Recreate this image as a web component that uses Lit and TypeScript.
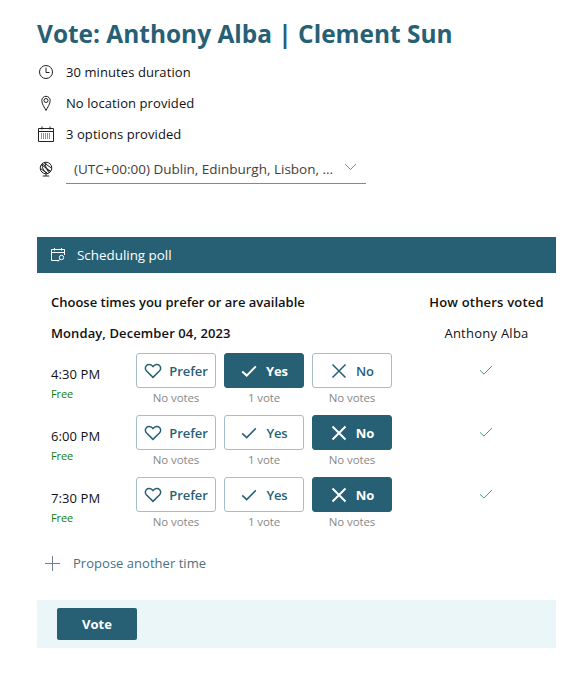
import { LitElement, html, css, svg } from "lit";
import { customElement } from "lit/decorators.js";

const clock = svg`<circle cx="8" cy="8" r="6.500"/><path d="M8 3.600V8.500H11.500"/>`;
const pin = svg`<path d="M8 15.500C6.600 12.500 3.800 9 3.800 5.500A4.200 4.200 0 0 1 12.200 5.500C12.200 9 9.400 12.500 8 15.500Z"/><circle cx="8" cy="5.500" r="2"/>`;
const cal = svg`<path d="M.5 2.500H15.500V15.500H.5ZM.5 5.500H15.500M4 .5V3.500M12 .5V3.500"/><path stroke-dasharray="1 1" d="M3 8H13M3 10H13M3 12H13"/>`;
const globe = svg`<circle cx="8" cy="7" r="5.800"/><path d="M3 3.500L13 10.500M2.600 7.500L9 12.400M6 1.800L13.400 7M4.400 2.900C3.600 6.400 5.400 10 9.400 12.300M8 1.500C6.600 5 8.600 9.500 13 10.500M5.400 3L11 11.700M8 12.800V15M4.800 15H11.200"/>`;
const poll = svg`<path d="M9 13.500H1.500V2.500H14.500V8M1.500 5.500H14.500M4.500 1V3.500M11.500 1V3.500"/><circle cx="11.500" cy="10.500" r="2.200"/><path d="M10 12.200L8 14.500"/>`;
const heart = svg`<path d="M9 15.400L2.600 9.100C.9 7.300 1 4.900 2.500 3.500C4.100 2 6.900 2.100 9 4.500C11.100 2.100 13.900 2 15.500 3.500C17 4.900 17.100 7.300 15.400 9.100Z"/>`;
const check = svg`<path d="M2.200 9.400L6.700 13.600L15.800 4.400"/>`;
const cross = svg`<path d="M2.500 2.500L15.500 15.500M15.500 2.500L2.500 15.500"/>`;
const chevron = svg`<path d="M1 1L6.500 6.500L12 1"/>`;
const plus = svg`<path d="M7.500 0V15M0 7.500H15"/>`;

type Choice = "prefer" | "yes" | "no";
const rows: { time: string; on: Choice }[] = [
  { time: "4:30 PM", on: "yes" },
  { time: "6:00 PM", on: "no" },
  { time: "7:30 PM", on: "no" },
];
const options: { id: Choice; label: string; votes: string; icon: unknown }[] = [
  { id: "prefer", label: "Prefer", votes: "No votes", icon: heart },
  { id: "yes", label: "Yes", votes: "1 vote", icon: check },
  { id: "no", label: "No", votes: "No votes", icon: cross },
];

@customElement("app-root")
export class AppRoot extends LitElement {
  static styles = css`
    :host { display: block; width: 587px; height: 675px; overflow: hidden; background: #fff;
      font-family: "Open Sans", "Noto Sans", sans-serif; color: #111; font-size: 13px; }
    * { box-sizing: border-box; }
    .page { padding: 16px 31px 0 37px; }
    h1 { margin: 0; font-size: 24.450px; line-height: 36px; font-weight: 700; color: #275f75; }
    .info { display: flex; flex-direction: column; margin-top: 4px; }
    .line { display: flex; align-items: center; height: 31px; gap: 12px; }
    .line svg { width: 16px; height: 16px; fill: none; stroke: #222; stroke-width: 1; margin-left: 1px; }
    .line span { letter-spacing: .08px; }
    .tzline { margin-top: 3px; height: 36px; align-items: flex-start; }
    .tzline > svg { margin-top: 9px; }
    .tz { width: 300px; height: 30px; border-bottom: 1px solid #8a8886; display: flex;
      align-items: center; justify-content: space-between; padding: 0 9px 0 8px; color: #3f3e3d; font-size: 13.500px; margin-top: 2px; }
    .tz svg { width: 13px; height: 8px; stroke: #8a8886; margin: 0 0 3px; }
    .tz span { letter-spacing: 0; }
    .bar { margin-top: 49px; height: 36px; background: #275f75; color: #fff; display: flex; align-items: center;
      gap: 11px; padding-left: 13px; font-size: 13.400px; }
    .bar svg { width: 16px; height: 16px; fill: none; stroke: #fff; stroke-width: 1; }
    .body { padding-left: 14px; }
    .heads { display: grid; grid-template-columns: 1fr 139px; }
    .heads div { height: 31px; display: flex; align-items: center; font-weight: 600; }
    .heads .c { justify-content: center; letter-spacing: .2px; }
    .t1 { margin-top: 13px; }
    .heads .date { letter-spacing: .1px; }
    .heads .reg { font-weight: 400; letter-spacing: .25px; }
    .rows { margin-top: 5px; }
    .row { display: grid; grid-template-columns: 85px 256px 1fr; height: 62px; }
    .time { padding-top: 10px; line-height: 22px; letter-spacing: .1px; }
    .free { font-size: 11px; color: #107c10; line-height: 18px; letter-spacing: -.1px; }
    .opts { display: grid; grid-template-columns: 80px 80px 80px; column-gap: 8px; }
    .opt { display: flex; flex-direction: column; align-items: center; }
    .btn { width: 80px; height: 35px; border: 1px solid #a3bec9; border-radius: 3px; background: #fff; color: #275f75;
      display: flex; align-items: center; justify-content: center; gap: 8px; font-weight: 600; letter-spacing: -.1px; }
    .btn svg { width: 18px; height: 18px; fill: none; stroke: currentColor; stroke-width: 1.500; flex: none; }
    .btn.on { background: #275f75; color: #fff; border-color: #275f75; font-weight: 700; }
    .btn.on svg { stroke-width: 2; }
    .btn.prefer { gap: 7px; }
    .votes { font-size: 11.500px; color: #8a8886; line-height: 16px; margin-top: 2px; letter-spacing: -.1px; }
    .other { display: flex; justify-content: center; padding-top: 9px; padding-left: 23px; }
    .other svg { width: 16px; height: 16px; fill: none; stroke: #2f8a8a; stroke-width: 1; }
    .propose { display: flex; align-items: center; gap: 13px; height: 30px; margin-top: 9px; margin-left: -6px; color: #4b6f80; letter-spacing: .03px; }
    .propose svg { width: 15px; height: 15px; fill: none; stroke: #6e7f9c; stroke-width: 1; }
    .foot { margin-top: 22px; height: 48px; background: #ebf6f9; padding: 8px 0 0 20px; }
    .vote { width: 80px; height: 32px; background: #275f75; color: #fff; border-radius: 2px; display: flex;
      align-items: center; justify-content: center; font-weight: 700; }
  `;

  render() {
    const line = (icon: unknown, text: string) =>
      html`<div class="line"><svg viewBox="0 0 16 16">${icon}</svg><span>${text}</span></div>`;
    return html`<div class="page">
      <h1>Vote: Anthony Alba | Clement Sun</h1>
      <div class="info">
        ${line(clock, "30 minutes duration")}
        ${line(pin, "No location provided")}
        ${line(cal, "3 options provided")}
        <div class="line tzline">
          <svg viewBox="0 0 16 16">${globe}</svg>
          <div class="tz"><span>(UTC+00:00) Dublin, Edinburgh, Lisbon, ...</span><svg viewBox="0 0 13 8" fill="none">${chevron}</svg></div>
        </div>
      </div>
      <div class="bar"><svg viewBox="0 0 16 16">${poll}</svg><span>Scheduling poll</span></div>
      <div class="body">
        <div class="heads t1"><div>Choose times you prefer or are available</div><div class="c">How others voted</div></div>
        <div class="heads"><div class="date">Monday, December 04, 2023</div><div class="c reg">Anthony Alba</div></div>
        <div class="rows">
          ${rows.map((r) => html`<div class="row">
            <div class="time">${r.time}<div class="free">Free</div></div>
            <div class="opts">
              ${options.map((o) => html`<div class="opt">
                <div class="btn ${o.id} ${r.on === o.id ? "on" : ""}"><svg viewBox="0 0 18 18">${o.icon}</svg>${o.label}</div>
                <div class="votes">${o.votes}</div>
              </div>`)}
            </div>
            <div class="other"><svg viewBox="0 0 18 18">${check}</svg></div>
          </div>`)}
        </div>
        <div class="propose"><svg viewBox="0 0 15 15">${plus}</svg><span>Propose another time</span></div>
      </div>
      <div class="foot"><div class="vote">Vote</div></div>
    </div>`;
  }
}
